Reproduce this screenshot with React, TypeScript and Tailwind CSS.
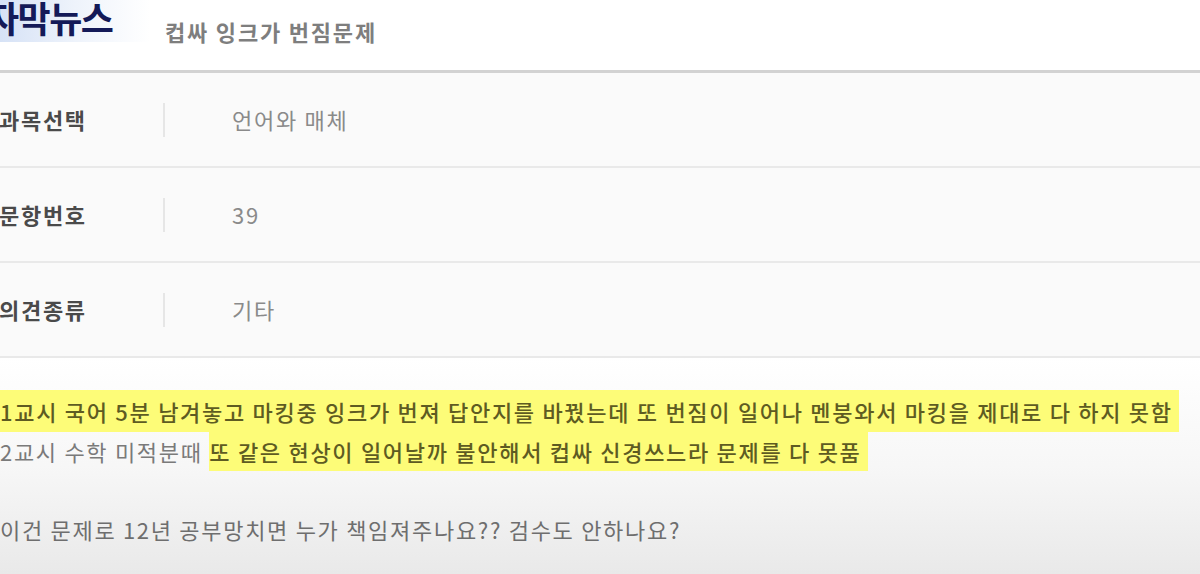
import React from "react";

const font = { fontFamily: '"Noto Sans CJK KR", "Noto Sans", sans-serif' };

function Row({ label, value }: { label: string; value: string }) {
  return (
    <div className="flex h-[95px] items-center border-b-2 border-[#e9e9e9] bg-[#fafafa]">
      <div className="w-[164px] shrink-0 text-[22px] font-bold tracking-[1.7px] text-[#4a4a4a] -ml-[1px]">{label}</div>
      <div className="h-[34px] w-[2px] shrink-0 bg-[#e6e6e6]" />
      <div className="ml-[67px] text-[22px] tracking-[1.7px] text-[#8a8a8a]">{value}</div>
    </div>
  );
}

export default function App() {
  return (
    <div className="flex h-[574px] w-[1200px] flex-col overflow-hidden bg-white" style={font}>
      {/* header */}
      <div className="relative flex h-[73px] shrink-0 items-start border-b-[3px] border-[#d2d2d2] bg-white">
        <div className="flex h-[42px] w-[150px] shrink-0 items-center overflow-hidden bg-gradient-to-r from-[#d6e2f6] via-[#eef3fb] to-white">
          <span className="-ml-[14px] -mt-[8px] text-[36px] font-bold leading-none tracking-[-1.5px] text-[#141a58]">자막뉴스</span>
        </div>
        <div className="ml-[15px] mt-[15px] text-[22px] font-bold tracking-[1.8px] text-[#7e7e7e]">컵싸 잉크가 번짐문제</div>
      </div>

      <Row label="과목선택" value="언어와 매체" />
      <Row label="문항번호" value="39" />
      <Row label="의견종류" value="기타" />

      <div className="flex flex-1 flex-col bg-gradient-to-b from-white via-[#f7f7f7] to-[#e9e9e9] pt-[32px]">
        <div className="flex h-[42px] items-center">
          <span className="flex h-[42px] items-center bg-[#fdfc78] pr-[6px] text-[22px] font-medium tracking-[1.7px] text-[#5e5b22]">
            1교시 국어 5분 남겨놓고 마킹중 잉크가 번져 답안지를 바꿨는데 또 번짐이 일어나 멘붕와서 마킹을 제대로 다 하지 못함
          </span>
        </div>
        <div className="flex h-[39px] items-center">
          <span className="text-[22px] tracking-[1.7px] text-[#7a7a7a]">2교시 수학 미적분때&nbsp;</span>
          <span className="flex h-[39px] items-center bg-[#fdfc78] pr-[6px] text-[22px] font-medium tracking-[1.7px] text-[#5e5b22]">
            또 같은 현상이 일어날까 불안해서 컵싸 신경쓰느라 문제를 다 못품
          </span>
        </div>
        <div className="mt-[42px] text-[22px] tracking-[1.7px] text-[#6e6e6e]">
          이건 문제로 12년 공부망치면 누가 책임져주나요?? 검수도 안하나요?
        </div>
      </div>
    </div>
  );
}
